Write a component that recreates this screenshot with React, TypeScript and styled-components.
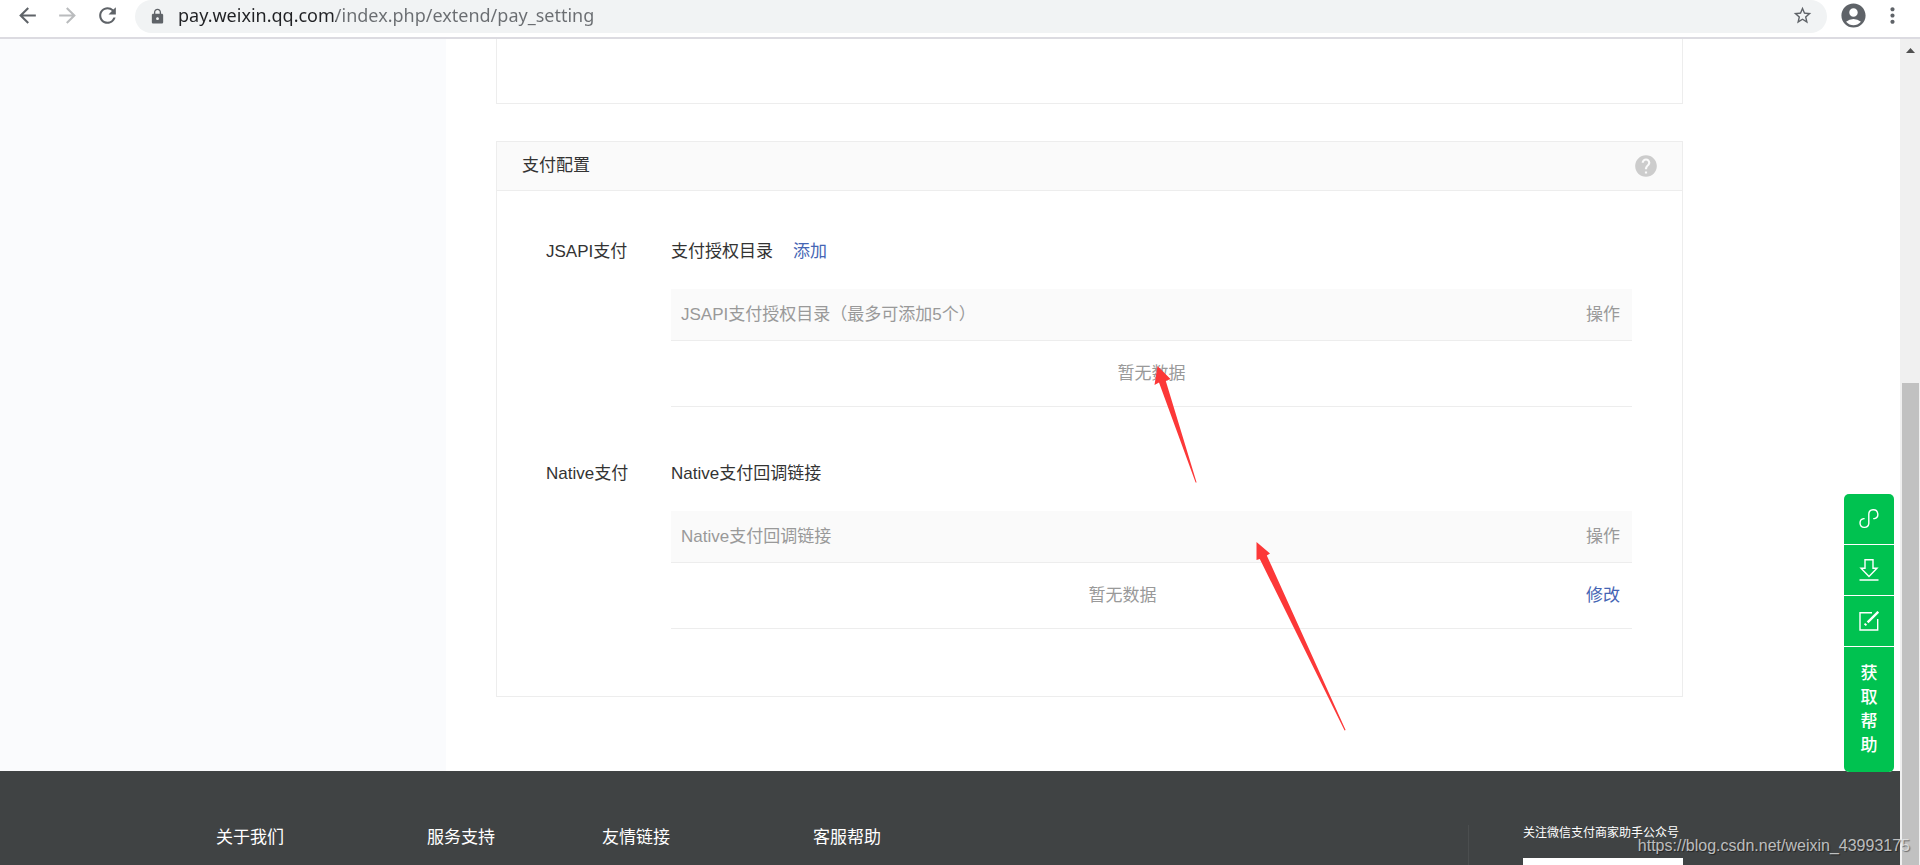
import React from "react";
import styled, { createGlobalStyle } from "styled-components";
import {
  MdAccountCircle,
  MdArrowBack,
  MdArrowForward,
  MdHelp,
  MdLock,
  MdMoreVert,
  MdRefresh,
  MdStarBorder,
} from "react-icons/md";

const GlobalStyle = createGlobalStyle`
  *, *::before, *::after { box-sizing: border-box; }
  body {
    margin: 0;
    overflow: hidden;
    font-family: "Liberation Sans", "Noto Sans CJK SC", sans-serif;
    font-size: 17px;
    line-height: 26px;
    color: #333;
    background: #fff;
  }
  button {
    padding: 0;
    border: 0;
    background: none;
    font: inherit;
    color: inherit;
    cursor: pointer;
  }
  a { text-decoration: none; }
  svg { display: block; }
`;

const Browser = styled.div`
  display: flex;
  flex-direction: column;
  height: 100vh;
  overflow: hidden;
  position: relative;
`;

/* Browser toolbar */

const Toolbar = styled.header`
  display: flex;
  flex: none;
  align-items: flex-start;
  gap: 15px;
  padding: 0 15px 4px;
  border-bottom: 2px solid #dcdbe1;
`;

const ToolButton = styled.button<{ $muted?: boolean }>`
  display: flex;
  align-items: center;
  height: 30px;
  color: ${(p) => (p.$muted ? "#babcbe" : "#5f6368")};
`;

const ToolGroup = styled.div`
  display: flex;
  gap: 12px;
`;

const AddressBar = styled.div`
  display: flex;
  flex: 1;
  align-items: flex-start;
  gap: 12px;
  height: 33px;
  padding: 0 14px;
  margin-right: -3px;
  border-radius: 17px;
  background: #f1f3f4;
  color: #5f6368;
`;

const LockBadge = styled.span`
  display: flex;
  align-items: center;
  height: 32px;
`;

/* The host part of the address is darker than its path. */
const AddressInput = styled.input`
  flex: 1;
  min-width: 0;
  height: 30px;
  padding: 0;
  border: 0;
  outline: 0;
  font-family: "Noto Sans", sans-serif;
  font-size: 18px;
  color: #202124;
  background: linear-gradient(to right, #202124 158px, #6a6d71 158px);
  background-clip: text;
  -webkit-background-clip: text;
  -webkit-text-fill-color: transparent;
`;

/* Page */

const Viewport = styled.div`
  display: flex;
  flex: 1;
  min-height: 0;
`;

const Page = styled.div`
  display: flex;
  flex: 1;
  flex-direction: column;
  min-width: 0;
  overflow: hidden;
`;

const Body = styled.div`
  display: flex;
  flex: none;
`;

const Sidebar = styled.aside`
  flex: none;
  width: 446px;
  background: #fafbfd;
`;

const Main = styled.main`
  flex: 1;
  min-width: 0;
  padding: 0 217px 74px 50px;
`;

const PreviousCard = styled.div`
  height: 65px;
  margin-bottom: 37px;
  border: 1px solid #ededed;
  border-top: 0;
`;

const Card = styled.section`
  border: 1px solid #ededed;
`;

const CardHeader = styled.div`
  display: flex;
  align-items: center;
  justify-content: space-between;
  height: 49px;
  padding: 0 23px 0 25px;
  border-bottom: 1px solid #ededed;
  background: #fafafa;
`;

const CardTitle = styled.h2`
  margin: 0;
  font-size: 17px;
  font-weight: 400;
`;

const HelpButton = styled.button`
  color: #ccc;
`;

const CardBody = styled.div`
  display: flex;
  flex-direction: column;
  gap: 54px;
  padding: 48px 50px 67px 49px;
`;

const SettingRow = styled.div`
  display: flex;
`;

const SettingLabel = styled.div`
  flex: none;
  width: 125px;
`;

const SettingContent = styled.div`
  position: relative;
  flex: 1;
  min-width: 0;
`;

const SettingTitle = styled.div`
  display: flex;
  gap: 20px;
  margin-bottom: 24px;
`;

const ActionLink = styled.a`
  color: #4565b4;
`;

const DataTable = styled.table`
  width: 100%;
  border-spacing: 0;
  color: #999;

  th,
  td {
    padding: 0 10px;
    border-bottom: 1px solid #ededed;
    font-weight: 400;
    text-align: center;
  }
  th {
    height: 52px;
    background: #fafafa;
  }
  th:first-child {
    text-align: left;
  }
  th:last-child {
    width: 58px;
    padding: 0 12px;
    white-space: nowrap;
  }
  td {
    height: 66px;
  }
`;

/* Red marks drawn over the tables */
const Arrow = styled.svg<{ $top: number; $shift: number }>`
  position: absolute;
  top: ${(p) => p.$top}px;
  left: calc(50% + ${(p) => p.$shift}px);
  pointer-events: none;
  fill: #fc3838;
`;

/* Footer */

const Footer = styled.footer`
  display: flex;
  flex: 1 0 auto;
  justify-content: space-between;
  padding: 54px 217px 0 216px;
  background: #404344;
  color: #fff;
`;

const FooterLinks = styled.div`
  display: grid;
  grid-template-columns: 211px 175px 211px auto;
`;

const FooterHeading = styled.h3`
  margin: 0;
  font-size: 17px;
  font-weight: 400;
`;

const Follow = styled.div`
  padding-left: 54px;
  border-left: 1px solid #4b4e4f;
`;

const FollowCaption = styled.p`
  margin: 0 0 16px;
  font-size: 12px;
  line-height: 17px;
  white-space: nowrap;
`;

const QrCode = styled.div`
  width: 160px;
  height: 160px;
  background: #fff;
`;

/* Scroll bar */

const ScrollTrack = styled.div`
  display: flex;
  flex: none;
  flex-direction: column;
  width: 20px;
  padding: 9px 1px 0 2px;
  background: #f0f0f0;
`;

const ScrollUp = styled.button`
  align-self: center;
`;

const ScrollThumb = styled.div`
  flex: 1;
  margin-top: 330px;
  background: #c1c1c1;
`;

/* Floating help bar */

const FloatBar = styled.nav`
  position: absolute;
  right: 26px;
  bottom: 93px;
  display: flex;
  flex-direction: column;
  gap: 1px;
  width: 50px;
  border-radius: 5px;
  overflow: hidden;
  background: #fff;
`;

const FloatButton = styled.button`
  display: flex;
  align-items: center;
  justify-content: center;
  height: 50px;
  background: #00c250;
  color: #fff;
`;

const HelpTextButton = styled(FloatButton)`
  height: 125px;
  padding: 0 16px;
  font-weight: 500;
  line-height: 24px;
`;

const Watermark = styled.div`
  position: absolute;
  right: 10px;
  bottom: 6px;
  font-size: 16px;
  color: rgba(235, 235, 235, 0.75);
  text-shadow: 1px 1px 1px rgba(0, 0, 0, 0.45);
`;

const strokeProps = { fill: "none", stroke: "currentColor", strokeWidth: 1.4 };

export default function App() {
  return (
    <Browser>
      <GlobalStyle />
      <Toolbar>
        <ToolButton aria-label="后退">
          <MdArrowBack size={25} />
        </ToolButton>
        <ToolButton aria-label="前进" $muted>
          <MdArrowForward size={25} />
        </ToolButton>
        <ToolButton aria-label="刷新">
          <MdRefresh size={25} />
        </ToolButton>
        <AddressBar>
          <LockBadge>
            <MdLock size={17} />
          </LockBadge>
          <AddressInput
            aria-label="地址"
            defaultValue="pay.weixin.qq.com/index.php/extend/pay_setting"
          />
          <ToolButton aria-label="收藏">
            <MdStarBorder size={21} />
          </ToolButton>
        </AddressBar>
        <ToolGroup>
          <ToolButton aria-label="用户">
            <MdAccountCircle size={29} />
          </ToolButton>
          <ToolButton aria-label="菜单">
            <MdMoreVert size={25} />
          </ToolButton>
        </ToolGroup>
      </Toolbar>

      <Viewport>
        <Page>
          <Body>
            <Sidebar />
            <Main>
              <PreviousCard />
              <Card>
                <CardHeader>
                  <CardTitle>支付配置</CardTitle>
                  <HelpButton aria-label="帮助">
                    <MdHelp size={26} />
                  </HelpButton>
                </CardHeader>
                <CardBody>
                  <SettingRow>
                    <SettingLabel>JSAPI支付</SettingLabel>
                    <SettingContent>
                      <SettingTitle>
                        <span>支付授权目录</span>
                        <ActionLink href="#add">添加</ActionLink>
                      </SettingTitle>
                      <DataTable>
                        <thead>
                          <tr>
                            <th>JSAPI支付授权目录（最多可添加5个）</th>
                            <th>操作</th>
                          </tr>
                        </thead>
                        <tbody>
                          <tr>
                            <td colSpan={2}>暂无数据</td>
                          </tr>
                        </tbody>
                      </DataTable>
                      <Arrow $top={127} $shift={2} width="43" height="117" viewBox="0 0 43 117">
                        <path d="M3.5 0 L16.5 13 L11.8 15 L42.6 116.5 L41.6 116.5 L5 16.5 L0.5 19 Z" />
                      </Arrow>
                    </SettingContent>
                  </SettingRow>
                  <SettingRow>
                    <SettingLabel>Native支付</SettingLabel>
                    <SettingContent>
                      <SettingTitle>
                        <span>Native支付回调链接</span>
                      </SettingTitle>
                      <DataTable>
                        <thead>
                          <tr>
                            <th>Native支付回调链接</th>
                            <th>操作</th>
                          </tr>
                        </thead>
                        <tbody>
                          <tr>
                            <td>暂无数据</td>
                            <td>
                              <ActionLink href="#edit">修改</ActionLink>
                            </td>
                          </tr>
                        </tbody>
                      </DataTable>
                      <Arrow $top={81} $shift={104} width="90" height="189" viewBox="0 0 90 189">
                        <path d="M0.5 0 L14 11.5 L10.8 13.5 L89.6 188 L88.6 188.4 L3.8 17 L0.5 18 Z" />
                      </Arrow>
                    </SettingContent>
                  </SettingRow>
                </CardBody>
              </Card>
            </Main>
          </Body>
          <Footer>
            <FooterLinks>
              <FooterHeading>关于我们</FooterHeading>
              <FooterHeading>服务支持</FooterHeading>
              <FooterHeading>友情链接</FooterHeading>
              <FooterHeading>客服帮助</FooterHeading>
            </FooterLinks>
            <Follow>
              <FollowCaption>关注微信支付商家助手公众号</FollowCaption>
              <QrCode />
            </Follow>
          </Footer>
        </Page>
        <ScrollTrack>
          <ScrollUp aria-label="向上滚动">
            <svg width="9" height="5" viewBox="0 0 9 5">
              <path d="M4.5 0 L9 5 H0 Z" fill="#505050" />
            </svg>
          </ScrollUp>
          <ScrollThumb />
        </ScrollTrack>
      </Viewport>

      <FloatBar>
        <FloatButton aria-label="小程序">
          <svg width="20" height="20" viewBox="0 0 20 20" {...strokeProps}>
            <path d="M5.6 9.6 H4.8 A4.4 4.4 0 1 0 9.8 14.6 V5.2 A4.5 4.5 0 1 1 15.4 9.6 H14.2" />
          </svg>
        </FloatButton>
        <FloatButton aria-label="下载">
          <svg width="20" height="22" viewBox="0 0 20 22" {...strokeProps}>
            <path d="M6 0.8 H14 V9.2 H18 L10 17.6 L2 9.2 H6 Z M0.5 21 H19.5" />
          </svg>
        </FloatButton>
        <FloatButton aria-label="反馈">
          <svg width="20" height="20" viewBox="0 0 20 20" {...strokeProps}>
            <path d="M13 1.7 H1 V19 H18.7 V8" />
            <path d="M19.3 0.8 L8.6 11.4" strokeWidth="2.4" />
            <path d="M7.2 12.8 L5.8 14.2" strokeWidth="2.6" />
          </svg>
        </FloatButton>
        <HelpTextButton>获取帮助</HelpTextButton>
      </FloatBar>

      <Watermark>https://blog.csdn.net/weixin_43993175</Watermark>
    </Browser>
  );
}
